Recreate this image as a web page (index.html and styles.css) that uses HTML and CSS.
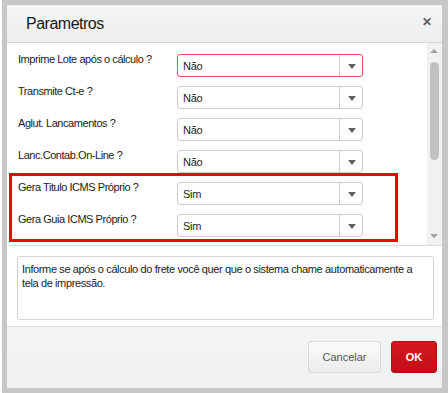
FILE: index.html
```html
<!DOCTYPE html>
<html>
<head>
<meta charset="utf-8">
<link rel="stylesheet" href="styles.css">
</head>
<body>
<div class="dialog">
  <div class="header">
    <span class="title">Parametros</span>
    <span class="close">&#x2715;</span>
  </div>
  <div class="params">
    <div class="rows">
      <div class="row"><span class="label">Imprime Lote após o cálculo ?</span><div class="select invalid"><span class="value">Não</span><span class="arrow"></span></div></div>
      <div class="row"><span class="label">Transmite Ct-e ?</span><div class="select"><span class="value">Não</span><span class="arrow"></span></div></div>
      <div class="row"><span class="label">Aglut. Lancamentos ?</span><div class="select"><span class="value">Não</span><span class="arrow"></span></div></div>
      <div class="row"><span class="label">Lanc.Contab.On-Line ?</span><div class="select"><span class="value">Não</span><span class="arrow"></span></div></div>
      <div class="row"><span class="label">Gera Titulo ICMS Próprio ?</span><div class="select"><span class="value">Sim</span><span class="arrow"></span></div></div>
      <div class="row"><span class="label">Gera Guia ICMS Próprio ?</span><div class="select"><span class="value">Sim</span><span class="arrow"></span></div></div>
    </div>
    <div class="scrollbar">
      <span class="sb-up"></span>
      <div class="sb-track"><div class="sb-thumb"></div></div>
      <span class="sb-down"></span>
    </div>
    <div class="highlight"></div>
  </div>
  <div class="help">
    <div class="help-box">Informe se após o cálculo do frete você quer que o sistema chame automaticamente a tela de impressão.</div>
  </div>
  <div class="footer">
    <button class="btn btn-cancel">Cancelar</button>
    <button class="btn btn-ok">OK</button>
  </div>
</div>
</body>
</html>
```
FILE: styles.css
```css
html, body {
  margin: 0;
  padding: 0;
  background: #ffffff;
}
body {
  padding-left: 2px;
  font-family: "Liberation Sans", Arial, sans-serif;
}
.dialog {
  width: 435px;
  height: 383px;
  border: 5px solid #c7c7c7;
  border-right-width: 6px;
  display: flex;
  flex-direction: column;
  background: #fff;
}
.header {
  height: 37px;
  flex: none;
  border-bottom: 1px solid #d6d6d6;
  background: linear-gradient(#f4f5f6, #eceef0);
  display: flex;
  align-items: center;
  justify-content: space-between;
  padding: 0 9px 0 19px;
}
.title {
  font-size: 16px;
  letter-spacing: -0.5px;
  color: #1a1a1a;
  margin-top: 1px;
}
.close {
  font-size: 12px;
  font-weight: bold;
  color: #5a6068;
  margin-top: -4px;
  margin-right: 1px;
}
.params {
  position: relative;
  height: 202px;
  flex: none;
  display: flex;
  border-bottom: 1px solid #dcdcdc;
}
.rows {
  flex: 1;
  padding: 5px 0 0 11px;
}
.row {
  height: 32px;
  display: flex;
}
.label {
  width: 159px;
  font-size: 11px;
  letter-spacing: -0.45px;
  color: #222;
  margin-top: 5px;
  line-height: 12px;
}
.select {
  margin-top: 6px;
  width: 184px;
  height: 21px;
  border: 1px solid #cfcfcf;
  border-radius: 3px;
  display: flex;
  align-items: center;
  background: #fff;
}
.select.invalid {
  border-color: #e0545c;
}
.value {
  flex: 1;
  font-size: 11px;
  letter-spacing: -0.3px;
  color: #222;
  padding-left: 5px;
}
.arrow {
  width: 22px;
  height: 21px;
  border-left: 1px solid #cfcfcf;
  position: relative;
}
.arrow::after {
  content: "";
  position: absolute;
  left: 8px;
  top: 9px;
  border-left: 4px solid transparent;
  border-right: 4px solid transparent;
  border-top: 5px solid #5f646b;
}
.scrollbar {
  width: 15px;
  flex: none;
  background: #f1f1f1;
  display: flex;
  flex-direction: column;
  align-items: center;
}
.sb-up, .sb-down {
  height: 16px;
  flex: none;
  position: relative;
  width: 15px;
}
.sb-up::after {
  content: "";
  position: absolute;
  left: 3px;
  top: 6px;
  border-left: 4px solid transparent;
  border-right: 4px solid transparent;
  border-bottom: 4px solid #a3a3a3;
}
.sb-down::after {
  content: "";
  position: absolute;
  left: 3px;
  top: 5px;
  border-left: 4px solid transparent;
  border-right: 4px solid transparent;
  border-top: 4px solid #a3a3a3;
}
.sb-track {
  flex: 1;
  width: 15px;
  display: flex;
  justify-content: center;
}
.sb-thumb {
  margin-top: 3px;
  width: 9px;
  height: 98px;
  border-radius: 5px;
  background: #c1c1c1;
}
.highlight {
  position: absolute;
  left: 2px;
  top: 130px;
  width: 383px;
  height: 63px;
  border: 3px solid #f50000;
}
.help {
  height: 80px;
  flex: none;
  padding: 10px 8px 0 10px;
  box-sizing: border-box;
}
.help-box {
  height: 64px;
  box-sizing: border-box;
  border: 1px solid #d3d3d3;
  border-radius: 3px;
  padding: 5px 4px;
  font-size: 11px;
  letter-spacing: -0.38px;
  line-height: 14px;
  color: #222;
}
.footer {
  flex: 1;
  background: linear-gradient(#f4f5f6, #eef0f2);
  border-top: 1px solid #e2e2e2;
  display: flex;
  justify-content: flex-end;
  align-items: flex-start;
  gap: 10px;
  padding: 14px 5px 0 0;
}
.btn {
  height: 32px;
  border-radius: 3px;
  font-family: "Liberation Sans", Arial, sans-serif;
  font-size: 11px;
  padding: 0;
}
.btn-cancel {
  width: 73px;
  border: 1px solid #dadada;
  background: linear-gradient(#fbfbfb, #ececec);
  color: #555;
}
.btn-ok {
  width: 46px;
  border: 1px solid #b50d16;
  background: linear-gradient(#d51820, #c10f17);
  color: #fff;
  font-weight: bold;
}
```
